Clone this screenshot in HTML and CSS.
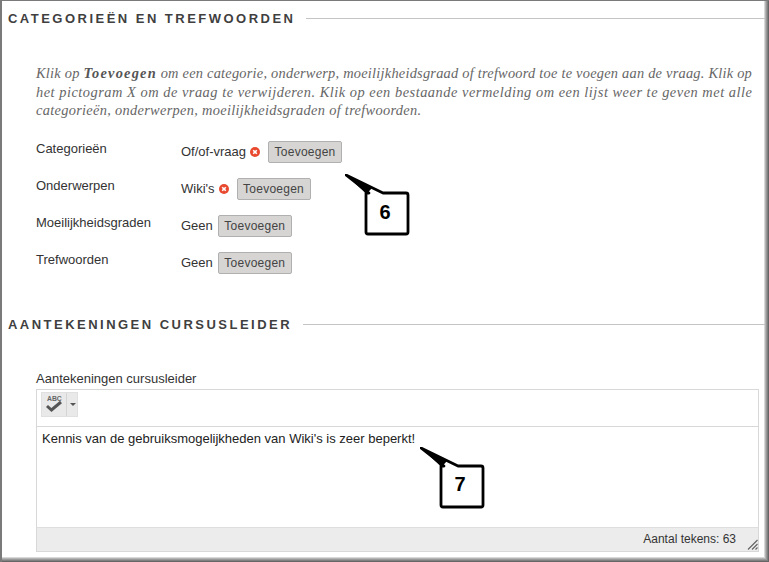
FILE: index.html
```html
<!DOCTYPE html>
<html lang="nl">
<head>
<meta charset="utf-8">
<title>Categorieën en trefwoorden</title>
<link rel="stylesheet" href="styles.css">
</head>
<body>
<div class="frame">
  <section class="section first">
    <div class="heading"><h2>CATEGORIEËN EN TREFWOORDEN</h2><span class="rule"></span></div>
    <p class="intro"><span class="line">Klik op <b>Toevoegen</b> om een categorie, onderwerp, moeilijkheidsgraad of trefwoord toe te voegen aan de vraag. Klik op</span><span class="line wide">het pictogram X om de vraag te verwijderen. Klik op een bestaande vermelding om een lijst weer te geven met alle</span><span class="line narrow">categorieën, onderwerpen, moeilijkheidsgraden of trefwoorden.</span></p>
    <div class="fields">
      <div class="field"><span class="label">Categorieën</span><span class="value">Of/of-vraag</span><svg class="remove" viewBox="0 0 10 10"><circle cx="5" cy="5" r="5" fill="#e8492f"/><path d="M3.2 3.2l3.6 3.6M6.8 3.2l-3.6 3.6" stroke="#fff" stroke-width="1.6"/></svg><button class="add">Toevoegen</button></div>
      <div class="field"><span class="label">Onderwerpen</span><span class="value">Wiki's</span><svg class="remove" viewBox="0 0 10 10"><circle cx="5" cy="5" r="5" fill="#e8492f"/><path d="M3.2 3.2l3.6 3.6M6.8 3.2l-3.6 3.6" stroke="#fff" stroke-width="1.6"/></svg><button class="add">Toevoegen</button></div>
      <div class="field"><span class="label">Moeilijkheidsgraden</span><span class="value">Geen</span><button class="add">Toevoegen</button></div>
      <div class="field"><span class="label">Trefwoorden</span><span class="value">Geen</span><button class="add">Toevoegen</button></div>
    </div>
  </section>
  <section class="section second">
    <div class="heading"><h2>AANTEKENINGEN CURSUSLEIDER</h2><span class="rule"></span></div>
    <div class="notes-label">Aantekeningen cursusleider</div>
    <div class="editor">
      <div class="toolbar">
        <div class="tool">
          <span class="tool-main"><svg class="spell" viewBox="0 0 20 20"><text x="3" y="6.5" class="abc">ABC</text><path d="M3 12l4.5 4L17 8" fill="none" stroke="#555" stroke-width="3"/></svg></span>
          <span class="tool-arrow"></span>
        </div>
      </div>
      <div class="content">Kennis van de gebruiksmogelijkheden van Wiki's is zeer beperkt!</div>
      <div class="status"><span>Aantal tekens: 63</span><svg class="grip" viewBox="0 0 11 11"><path d="M10.5 1L1 10.5M10.5 5L5 10.5M10.5 8.5L8.5 10.5" stroke="#666" stroke-width="1.2" fill="none"/></svg></div>
    </div>
  </section>
</div>
<svg class="callout c6" viewBox="0 0 70 70"><path d="M1 1L38 19H61Q63 19 63 21V58Q63 60 61 60H23Q21 60 21 58V19H24Z" fill="#fff" stroke="#000" stroke-width="2.8" stroke-linejoin="round"/><path d="M1 1L27 14L21.5 20Z" fill="#000"/></svg>
<span class="callout-num n6">6</span>
<svg class="callout c7" viewBox="0 0 70 70"><path d="M1 1L38 19H61Q63 19 63 21V58Q63 60 61 60H23Q21 60 21 58V19H24Z" fill="#fff" stroke="#000" stroke-width="2.8" stroke-linejoin="round"/><path d="M1 1L27 14L21.5 20Z" fill="#000"/></svg>
<span class="callout-num n7">7</span>
</body>
</html>
```
FILE: styles.css
```css
html, body { margin: 0; padding: 0; background: #fff; }
body { width: 769px; height: 562px; overflow: hidden; position: relative; font-family: "Liberation Sans", Arial, sans-serif; color: #333; }
.frame { box-sizing: border-box; width: 769px; height: 562px; border-top: 1px solid #7a7a7a; border-left: 2px solid #7a7a7a; box-shadow: inset -1px -1px 0 #666, inset -2px -2px 0 #808080, inset -3px -3px 0 #999, inset -4px -4px 0 #b4b4b4, inset -5px -5px 0 #d8d8d8; overflow: hidden; }
.section { padding-left: 6px; padding-right: 4px; }
.first { padding-top: 10px; }
.second { padding-top: 43px; }
.heading { display: flex; align-items: center; gap: 11px; height: 14px; }
.heading h2 { margin: 0; font-size: 13px; font-weight: bold; letter-spacing: 2.48px; color: #3f3f3f; white-space: nowrap; }
.rule { flex: 1; height: 1px; background: #c4c4c4; }
.intro { margin: 39px 0 0 28px; font-family: "Liberation Serif", serif; font-style: italic; font-size: 14.4px; line-height: 18.5px; color: #666; white-space: nowrap; }
.line { display: block; letter-spacing: 0.23px; }
.line.wide { letter-spacing: 0.51px; }
.line.narrow { letter-spacing: 0.3px; }
.intro b { color: #555; letter-spacing: 1.2px; }
.fields { margin: 20px 0 0 28px; display: flex; flex-direction: column; gap: 13px; }
.field { display: flex; align-items: center; height: 24px; font-size: 13px; }
.label { width: 145px; position: relative; top: -3px; }
.value { margin-right: 5px; }
.remove { width: 10px; height: 10px; margin-left: -1px; margin-right: 8px; }
.add { box-sizing: border-box; height: 22px; width: 74px; padding: 0; border: 1px solid #b0b0b0; border-radius: 2px; background: #d6d5d3; font: 12px "Liberation Sans", Arial, sans-serif; letter-spacing: 0.25px; color: #444; }
.notes-label { margin: 40px 0 0 28px; font-size: 13px; line-height: 14px; }
.editor { margin: 3px 0 0 28px; width: 723px; height: 163px; box-sizing: border-box; border: 1px solid #d8d8d8; display: flex; flex-direction: column; }
.toolbar { height: 37px; flex: none; padding-top: 2px; box-sizing: border-box; border-bottom: 1px solid #d8d8d8; padding-left: 4px; }
.tool { display: flex; width: 37px; height: 25px; background: #e9e9e9; border: 1px solid #e0e0e0; box-sizing: border-box; }
.tool-main { width: 24px; border-right: 1px solid #d4d4d4; display: flex; align-items: center; justify-content: center; }
.spell { width: 20px; height: 20px; }
.abc { font: bold 6.8px "Liberation Sans", Arial, sans-serif; fill: #666; }
.tool-arrow { flex: 1; position: relative; }
.tool-arrow::after { content: ""; position: absolute; left: 3px; top: 10px; border: 3px solid transparent; border-top: 3px solid #555; border-bottom: 0; }
.content { flex: 1; padding: 4px 5px; font-size: 13px; line-height: 16px; color: #222; }
.status { height: 24px; flex: none; background: #ececec; border-top: 1px solid #dedede; display: flex; align-items: center; justify-content: flex-end; font-size: 12px; box-sizing: border-box; padding-right: 22px; padding-bottom: 1px; position: relative; color: #333; }
.grip { position: absolute; right: 0; bottom: 1px; width: 11px; height: 11px; }
.callout { position: absolute; width: 70px; height: 70px; }
.c6 { left: 345px; top: 174px; }
.c7 { left: 420px; top: 447px; }
.callout-num { position: absolute; font-size: 20px; font-weight: bold; color: #000; width: 42px; text-align: center; }
.n6 { left: 364px; top: 201px; }
.n7 { left: 439px; top: 473px; }
```
